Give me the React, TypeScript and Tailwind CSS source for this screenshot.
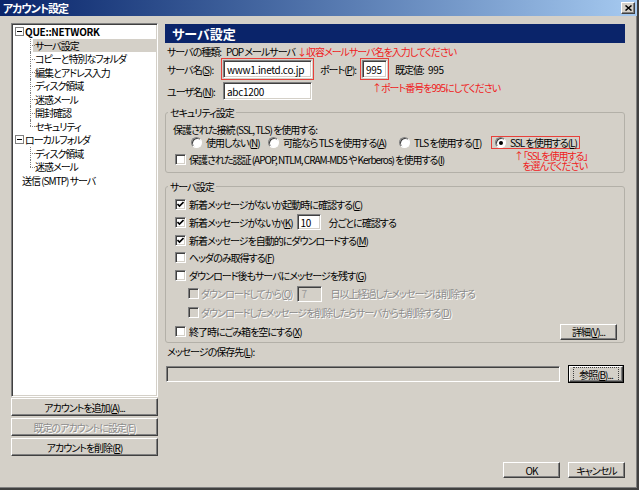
import React from 'react';

const U = ({ k }: { k: string }) => (
  <>
    (<span className="underline">{k}</span>)
  </>
);

function CheckBox({ checked = false, disabled = false }: { checked?: boolean; disabled?: boolean }) {
  return (
    <span
      className={`relative inline-block h-[11px] w-[11px] shrink-0 border border-t-[#808080] border-l-[#808080] border-b-white border-r-white shadow-[inset_1px_1px_0_#404040,inset_-1px_-1px_0_#d4d0c8] ${
        disabled ? 'bg-[#d4d0c8]' : 'bg-white'
      }`}
    >
      {checked && (
        <svg className="absolute left-[1px] top-[1px]" width="7" height="7" viewBox="0 0 7 7">
          <path d="M0.5 3 L2.5 5 L6.5 1" stroke="#000" strokeWidth="1.6" fill="none" />
        </svg>
      )}
    </span>
  );
}

function Radio({ checked = false }: { checked?: boolean }) {
  return (
    <span className="relative inline-flex h-[11px] w-[11px] shrink-0 items-center justify-center rounded-full border border-t-[#808080] border-l-[#808080] border-b-white border-r-white bg-white shadow-[inset_1px_1px_0_#404040]">
      {checked && <span className="h-[4px] w-[4px] rounded-full bg-black" />}
    </span>
  );
}

function Field({ className = '', children, disabled = false }: { className?: string; children?: React.ReactNode; disabled?: boolean }) {
  return (
    <div
      className={`flex shrink-0 items-center border border-t-[#808080] border-l-[#808080] border-b-white border-r-white pl-[3px] tracking-[-0.3px] shadow-[inset_1px_1px_0_#404040,inset_-1px_-1px_0_#d4d0c8] ${
        disabled ? 'bg-[#d4d0c8] text-[#9a9a9a]' : 'bg-white'
      } ${className}`}
    >
      {children}
    </div>
  );
}

function Btn({ className = '', children, disabled = false, def = false }: { className?: string; children?: React.ReactNode; disabled?: boolean; def?: boolean }) {
  if (def) {
    return (
      <div className={`flex shrink-0 border border-black ${className}`}>
        <div className="flex flex-1 items-center justify-center border border-t-white border-l-white border-b-[#404040] border-r-[#404040] bg-[#d4d0c8] shadow-[inset_-1px_-1px_0_#808080]">
          <span className="px-[5px] outline-1 outline-dotted outline-[#404040]">{children}</span>
        </div>
      </div>
    );
  }
  return (
    <div
      className={`flex shrink-0 items-center justify-center border border-t-white border-l-white border-b-[#404040] border-r-[#404040] bg-[#d4d0c8] shadow-[inset_-1px_-1px_0_#808080] ${
        disabled ? 'text-[#8c8c8c] [text-shadow:1px_1px_0_#fff]' : ''
      } ${className}`}
    >
      {children}
    </div>
  );
}

function TreeBox() {
  return (
    <span className="flex h-[9px] w-[9px] shrink-0 items-center justify-center border border-[#808080] bg-white">
      <span className="h-px w-[5px] bg-black" />
    </span>
  );
}

function Child({ label, last = false, selected = false }: { label: string; last?: boolean; selected?: boolean }) {
  return (
    <div className="relative flex h-[13.5px] items-center">
      <span className={`absolute left-[17px] top-0 border-l border-dotted border-[#808080] ${last ? 'h-1/2' : 'h-full'}`} />
      <span className="absolute left-[17px] top-1/2 w-[5px] border-t border-dotted border-[#808080]" />
      <span className={`ml-[20px] flex h-[13px] flex-1 items-center pl-[2px] ${selected ? 'bg-[#d4d0c8]' : ''}`}>{label}</span>
    </div>
  );
}

function Legend({ children }: { children: React.ReactNode }) {
  return <legend className="ml-[2px] px-[2px] leading-[13px]">{children}</legend>;
}

const dis = 'text-[#8c8c8c] [text-shadow:1px_1px_0_#fff]';

export default function App() {
  return (
    <div className="relative flex h-[490px] w-[639px] flex-col whitespace-nowrap border-r-2 border-b-2 border-r-[#404040] border-b-[#404040] bg-[#d4d0c8] font-['Noto_Sans_CJK_JP',sans-serif] text-[10px] leading-[13px] tracking-[-1px] text-black shadow-[inset_-1px_-1px_0_#808080] [font-feature-settings:'palt']">
      {/* Title bar */}
      <div className="flex h-[16px] shrink-0 items-center justify-between bg-linear-to-r from-[#0a246a] to-[#a6caf0] pl-[3px] pr-[2px]">
        <span className="text-[11px] font-bold text-white">アカウント設定</span>
        <div className="flex h-[12px] w-[14px] items-center justify-center border border-t-white border-l-white border-b-[#404040] border-r-[#404040] bg-[#d4d0c8] shadow-[inset_-1px_-1px_0_#808080]">
          <svg width="7" height="6" viewBox="0 0 7 6">
            <path d="M0.5 0.5 L6.5 5.5 M6.5 0.5 L0.5 5.5" stroke="#000" strokeWidth="1.5" />
          </svg>
        </div>
      </div>

      {/* Body */}
      <div className="flex flex-1 gap-[7px] pt-[7px] pb-[10px] pl-[11px]">
        {/* Left column */}
        <div className="flex w-[147px] flex-col">
          <div className="h-[374px] border border-t-[#808080] border-l-[#808080] border-b-white border-r-white bg-white shadow-[inset_1px_1px_0_#404040,inset_-1px_-1px_0_#d4d0c8]">
            <div className="flex flex-col pt-px pl-px">
              <div className="flex h-[13.5px] items-center pl-[2px]">
                <TreeBox />
                <span className="ml-[1px] font-bold tracking-[-0.3px]">QUE::NETWORK</span>
              </div>
              <Child label="サーバ設定" selected />
              <Child label="コピーと特別なフォルダ" />
              <Child label="編集とアドレス入力" />
              <Child label="ディスク領域" />
              <Child label="迷惑メール" />
              <Child label="開封確認" />
              <Child label="セキュリティ" last />
              <div className="flex h-[13.5px] items-center pl-[2px]">
                <TreeBox />
                <span className="ml-[1px]">ローカルフォルダ</span>
              </div>
              <Child label="ディスク領域" />
              <Child label="迷惑メール" last />
              <div className="flex h-[13.5px] items-center pl-[9px]">送信 (SMTP) サーバ</div>
            </div>
          </div>
          <Btn className="mt-[1px] h-[18px]">
            アカウントを追加<U k="A" />...
          </Btn>
          <Btn className="mt-[2px] h-[18px]" disabled>
            既定のアカウントに設定(E)
          </Btn>
          <Btn className="mt-[2px] h-[18px]">
            アカウントを削除<U k="R" />
          </Btn>
        </div>

        {/* Right column */}
        <div className="mt-[1px] flex w-[460px] flex-col">
          <div className="flex h-[19px] items-center bg-[#0a246a] pl-[7px] text-[13px] font-bold tracking-normal text-white">サーバ設定</div>

          <div className="mt-[2px] flex h-[13px] items-center pl-[2px]">
            <span className="mr-[5px] min-w-[46px] shrink-0">サーバの種類:</span>
            <span>POP メールサーバ</span>
          </div>

          <div className="flex h-[22px] items-center pl-[2px]">
            <span className="w-[54px] shrink-0">
              サーバ名<U k="S" />:
            </span>
            <div className="border border-[#e8403a] p-px">
              <Field className="h-[18px] w-[89px]">www1.inetd.co.jp</Field>
            </div>
            <span className="ml-[6px] w-[40px] shrink-0">
              ポート<U k="P" />:
            </span>
            <div className="border border-[#e8403a] p-px">
              <Field className="h-[18px] w-[25px]">995</Field>
            </div>
            <span className="ml-[6px] w-[33px] shrink-0">既定値:</span>
            <span className="tracking-[-0.3px]">995</span>
          </div>

          <div className="mt-[2px] flex h-[18px] items-center pl-[2px]">
            <span className="w-[56px] shrink-0">
              ユーザ名<U k="N" />:
            </span>
            <Field className="h-[18px] w-[89px]">abc1200</Field>
          </div>

          {/* Security */}
          <fieldset className="mt-[6px] rounded-[3px] border border-[#b3b0a8] pb-[3px]">
            <Legend>セキュリティ設定</Legend>
            <div className="mt-[4px] flex h-[13px] items-center pl-[7px]">保護された接続 (SSL, TLS) を使用する:</div>
            <div className="flex h-[13px] items-center pl-[25px]">
              <div className="flex w-[77px] shrink-0 items-center gap-[4px]">
                <Radio />
                <span>
                  使用しない<U k="N" />
                </span>
              </div>
              <div className="flex w-[131px] shrink-0 items-center gap-[4px]">
                <Radio />
                <span>
                  可能なら TLS を使用する<U k="A" />
                </span>
              </div>
              <div className="flex w-[92px] shrink-0 items-center gap-[4px]">
                <Radio />
                <span>
                  TLS を使用する<U k="T" />
                </span>
              </div>
              <div className="flex h-[13px] items-center gap-[4px] border border-[#e8403a] pl-[3px] pr-[2px]">
                <Radio checked />
                <span>
                  SSL を使用する<U k="L" />
                </span>
              </div>
            </div>
            <div className="flex h-[20px] items-center gap-[3px] pl-[9px]">
              <CheckBox />
              <span>
                保護された認証 (APOP, NTLM, CRAM-MD5 や Kerberos) を使用する<U k="I" />
              </span>
            </div>
          </fieldset>

          {/* Server settings */}
          <fieldset className="mt-[7px] rounded-[3px] border border-[#b3b0a8] pb-[1px]">
            <Legend>サーバ設定</Legend>
            <div className="mt-[2px] flex h-[18px] items-center gap-[3px] pl-[9px]">
              <CheckBox checked />
              <span>
                新着メッセージがないか起動時に確認する<U k="C" />
              </span>
            </div>
            <div className="flex h-[18px] items-center pl-[9px]">
              <CheckBox checked />
              <span className="ml-[3px] mr-[4px] min-w-[98px] shrink-0">
                新着メッセージがないか<U k="K" />
              </span>
              <Field className="h-[16px] w-[24px]">10</Field>
              <span className="ml-[8px]">分ごとに確認する</span>
            </div>
            <div className="flex h-[18px] items-center gap-[3px] pl-[9px]">
              <CheckBox checked />
              <span>
                新着メッセージを自動的にダウンロードする<U k="M" />
              </span>
            </div>
            <div className="flex h-[17px] items-center gap-[3px] pl-[9px]">
              <CheckBox />
              <span>
                ヘッダのみ取得する<U k="F" />
              </span>
            </div>
            <div className="flex h-[18px] items-center gap-[3px] pl-[9px]">
              <CheckBox />
              <span>
                ダウンロード後もサーバにメッセージを残す<U k="G" />
              </span>
            </div>
            <div className="flex h-[19px] items-center pl-[22px]">
              <CheckBox disabled />
              <span className={`ml-[2px] mr-[5px] min-w-[86px] shrink-0 ${dis}`}>
                ダウンロードしてから<U k="Q" />
              </span>
              <Field className="h-[16px] w-[25px]" disabled>
                7
              </Field>
              <span className={`ml-[8px] ${dis}`}>日以上経過したメッセージは削除する</span>
            </div>
            <div className="flex h-[19px] items-center pl-[22px]">
              <CheckBox disabled />
              <span className={`ml-[2px] ${dis}`}>
                ダウンロードしたメッセージを削除したらサーバからも削除する<U k="D" />
              </span>
            </div>
            <div className="flex h-[19px] items-center pl-[9px] pr-[7px]">
              <CheckBox />
              <span className="ml-[3px]">
                終了時にごみ箱を空にする<U k="X" />
              </span>
              <Btn className="ml-auto h-[16px] w-[57px]">
                詳細<U k="V" />...
              </Btn>
            </div>
          </fieldset>

          <div className="flex h-[17px] items-center pl-[2px]">
            メッセージの保存先<U k="L" />:
          </div>
          <div className="mt-[5px] flex h-[18px] items-center">
            <Field className="ml-[1px] h-[16px] w-[394px]" disabled />
            <Btn def className="ml-[8px] h-[18px] w-[56px]">
              参照<U k="B" />...
            </Btn>
          </div>

          <div className="mt-auto flex justify-end gap-[8px]">
            <Btn className="h-[16px] w-[57px]">OK</Btn>
            <Btn className="h-[16px] w-[57px]">キャンセル</Btn>
          </div>
        </div>
      </div>

      {/* Red annotations */}
      <span className="absolute left-[297px] top-[45px] text-[#f0201c]">↓収容メールサーバ名を入力してください</span>
      <span className="absolute left-[372px] top-[81px] text-[#f0201c]">↑ポート番号を995にしてください</span>
      <div className="absolute left-[514px] top-[151px] flex flex-col items-center leading-[10px] text-[#f0201c]">
        <span>↑「SSLを使用する」</span>
        <span className="pl-[8px]">を選んでください</span>
      </div>
    </div>
  );
}
